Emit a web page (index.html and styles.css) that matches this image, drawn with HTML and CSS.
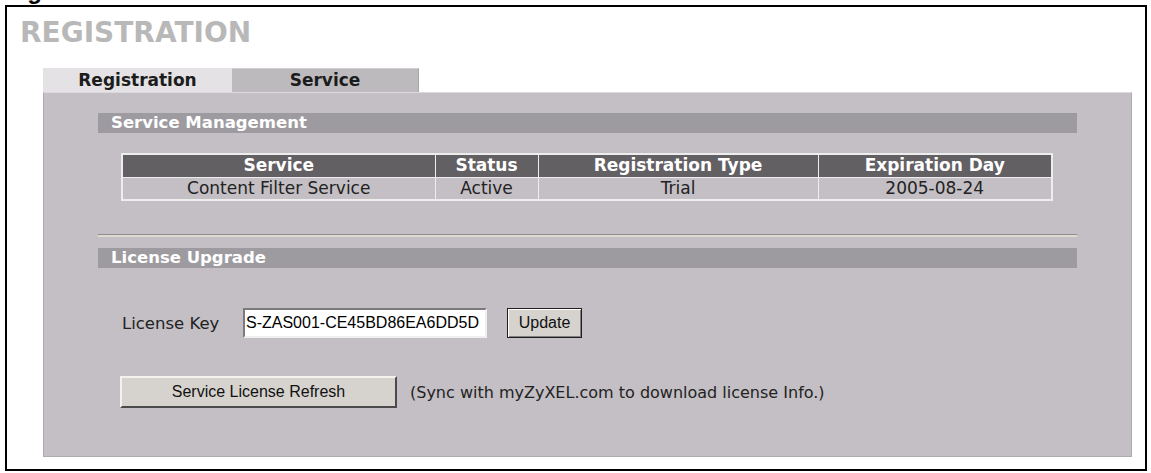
FILE: index.html
```html
<!DOCTYPE html>
<html>
<head>
    <meta charset="UTF-8">
    <title>Registration - Service</title>
    <link rel="stylesheet" href="styles.css">
</head>
<body>
    <div class="fig"><span>Figure 1</span></div>
    <div class="frame">
        <h1 class="title">REGISTRATION</h1>

        <ul class="tabs">
            <li class="tab tab-light">Registration</li>
            <li class="tab tab-dark">Service</li>
        </ul>

        <div class="panel">
            <div class="bar">Service Management</div>

            <table class="svc">
                <colgroup>
                    <col style="width: 313px">
                    <col style="width: 103px">
                    <col style="width: 280px">
                    <col style="width: 234px">
                </colgroup>
                <tr>
                    <th>Service</th>
                    <th>Status</th>
                    <th>Registration Type</th>
                    <th>Expiration Day</th>
                </tr>
                <tr>
                    <td>Content Filter Service</td>
                    <td>Active</td>
                    <td>Trial</td>
                    <td>2005-08-24</td>
                </tr>
            </table>

            <div class="rule"></div>

            <div class="bar">License Upgrade</div>

            <div class="keyrow">
                <span class="label">License Key</span>
                <input class="key" type="text" value="S-ZAS001-CE45BD86EA6DD5D">
                <button class="btn btn-update">Update</button>
            </div>

            <div class="refreshrow">
                <button class="btn btn-refresh">Service License Refresh</button>
                <span class="note">(Sync with myZyXEL.com to download license Info.)</span>
            </div>
        </div>
    </div>
</body>
</html>
```

FILE: styles.css
```css
* {
    margin: 0;
    padding: 0;
    box-sizing: border-box;
}

body {
    background: #fff;
    font-family: "DejaVu Sans", Verdana, sans-serif;
    color: #222;
}

/* caption of the manual page, only the tail of the "g" shows */
.fig {
    height: 5px;
    overflow: hidden;
    padding-left: 6px;
}

.fig span {
    display: block;
    margin-top: -21px;
    font: bold 24px/24px "Liberation Sans", Arial, sans-serif;
    color: #000;
}

.frame {
    margin-left: 5px;
    width: 1142px;
    height: 466px;
    border: 2px solid #000;
    padding: 10px 0 0 13px;
}

.title {
    font-size: 28px;
    line-height: 32px;
    font-weight: bold;
    color: #b8b8b8;
}

.tabs {
    list-style: none;
    display: flex;
    margin: 19px 0 0 23px;
    height: 24px;
}

.tab {
    width: 189px;
    text-align: center;
    font-size: 17px;
    font-weight: bold;
    line-height: 24px;
    color: #1c1c1c;
}

.tab-light {
    background: #e4e2e4;
}

.tab-dark {
    width: 187px;
    background: #bdbabe;
    border-top: 1px solid #d2cfd2;
    border-right: 1px solid #a9a6aa;
    line-height: 23px;
}

.panel {
    margin-left: 23px;
    width: 1089px;
    height: 365px;
    background: #c3bfc4;
    border: 1px solid #aeabaf;
    border-top-color: #dcdadc;
    padding: 20px 54px 0;
}

.bar {
    height: 20px;
    background: #9e9ba0;
    color: #fff;
    font-size: 16.5px;
    font-weight: bold;
    line-height: 20px;
    padding-left: 13px;
}

.svc {
    margin: 20px 0 0 23px;
    width: 930px;
    border-collapse: collapse;
    border: 2px solid #eeedee;
    font-size: 17px;
    table-layout: fixed;
}

.svc th,
.svc td {
    height: 23px;
    padding: 0;
    text-align: center;
    border: 1px solid #eeedee;
    line-height: 21px;
}

.svc th {
    background: #636064;
    color: #fff;
    font-weight: bold;
}

.svc td {
    color: #222;
}

.rule {
    margin: 33px 0 11px;
    height: 3px;
    border-top: 1px solid #8f8c90;
    border-bottom: 2px solid #dedad2;
}

.keyrow {
    display: flex;
    align-items: center;
    height: 30px;
    margin-top: 40px;
    padding-left: 24px;
}

.label {
    width: 121px;
    font-size: 16.5px;
}

.key {
    width: 244px;
    height: 30px;
    padding: 0 1px;
    border: 2px solid;
    border-color: #7b7b7b #efefef #efefef #7b7b7b;
    background: #fff;
    color: #000;
    font: 16px "Liberation Sans", Arial, sans-serif;
    outline: none;
}

.btn {
    font: 16px "Liberation Sans", Arial, sans-serif;
    color: #111;
    background: #d6d3ce;
    cursor: pointer;
}

.btn-update {
    margin-left: 20px;
    width: 75px;
    height: 30px;
    border: 1px solid #1e1e1e;
    box-shadow: inset 1px 1px #fff, inset -1px -1px #808080;
}

.refreshrow {
    display: flex;
    align-items: center;
    height: 32px;
    margin-top: 38px;
    padding-left: 22px;
}

.btn-refresh {
    width: 277px;
    height: 32px;
    border: 2px solid;
    border-color: #f4f2ee #4a4a4a #4a4a4a #f4f2ee;
}

.note {
    margin-left: 13px;
    font-size: 16px;
    color: #222;
}
```
